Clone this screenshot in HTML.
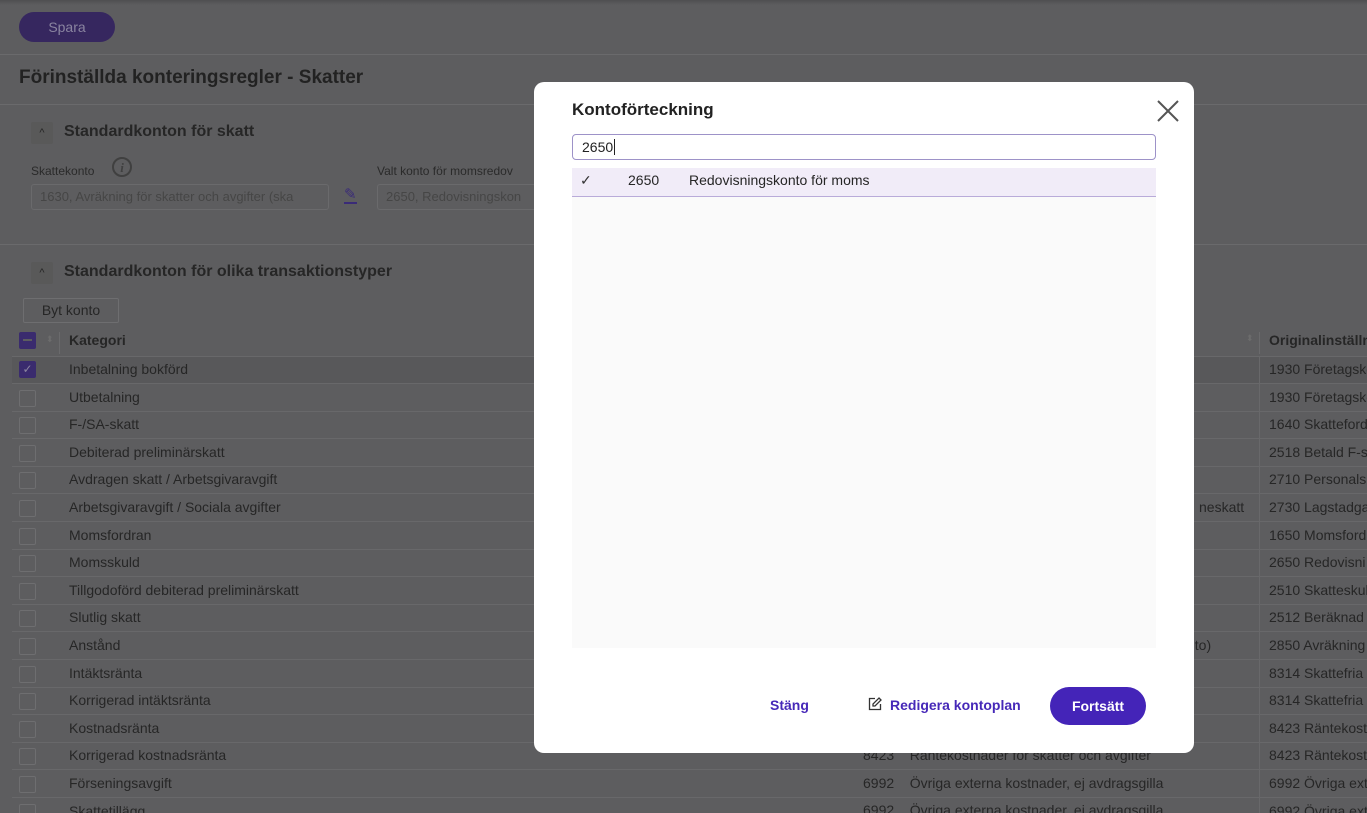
<!DOCTYPE html>
<html><head><meta charset="utf-8"><style>
*{box-sizing:border-box;margin:0;padding:0}
html,body{width:1367px;height:813px;overflow:hidden}
body{background:#5d5d5f;font-family:"Liberation Sans",sans-serif;color:#262626;position:relative;font-size:14px}
.a{position:absolute;white-space:nowrap}
.hl{position:absolute;left:0;right:0;height:1px;background:#6a6a6c}
.cb{position:absolute;left:19px;width:17px;height:17px;border:1px solid #6e6e70;border-radius:2px}
.rl{position:absolute;left:12px;right:0;height:1px;background:#68686a}
.modal{position:absolute;left:534px;top:82px;width:660px;height:671px;background:#fff;border-radius:10px}
</style></head><body>
<div class="a" style="left:0;top:0;width:1367px;height:5px;background:linear-gradient(#4f4f51,#5d5d5f)"></div>
<div class="a" style="left:19px;top:12px;width:96px;height:30px;border-radius:15px;background:#36275f;color:#8a84a0;text-align:center;line-height:30px;font-size:14px">Spara</div>
<div class="hl" style="top:54px"></div>
<div class="a" style="left:19px;top:67px;font-size:19px;font-weight:bold;color:#222">Förinställda konteringsregler - Skatter</div>
<div class="hl" style="top:104px"></div>
<div class="a" style="left:31px;top:122px;width:22px;height:22px;background:#595959;border-radius:2px;text-align:center;line-height:22px;font-size:11px">^</div>
<div class="a" style="left:64px;top:123px;font-size:16px;font-weight:bold;color:#262626">Standardkonton för skatt</div>
<div class="a" style="left:31px;top:164px;font-size:12px;color:#2a2a2a">Skattekonto</div>
<div class="a" style="left:112px;top:157px;width:20px;height:20px;border:2px solid #404040;border-radius:50%;text-align:center;font:italic bold 13px 'Liberation Serif',serif;line-height:17px;color:#404040">i</div>
<div class="a" style="left:31px;top:184px;width:298px;height:26px;border:1px solid #6a6a6c;border-radius:3px;padding-left:8px;line-height:24px;font-size:13px;color:#464646;overflow:hidden">1630, Avräkning för skatter och avgifter (ska</div>
<div class="a" style="left:344px;top:187px;font-size:15px;color:#3a2b78;border-bottom:2px solid #3a2b78;line-height:15px">✎</div>
<div class="a" style="left:377px;top:164px;font-size:12px;color:#2a2a2a">Valt konto för momsredov</div>
<div class="a" style="left:377px;top:184px;width:160px;height:26px;border:1px solid #6a6a6c;border-right:none;border-radius:3px 0 0 3px;padding-left:8px;line-height:24px;font-size:13px;color:#464646;overflow:hidden">2650, Redovisningskon</div>
<div class="hl" style="top:244px"></div>
<div class="a" style="left:31px;top:262px;width:22px;height:22px;background:#595959;border-radius:2px;text-align:center;line-height:22px;font-size:11px">^</div>
<div class="a" style="left:64px;top:263px;font-size:16px;font-weight:bold;color:#262626">Standardkonton för olika transaktionstyper</div>
<div class="a" style="left:23px;top:298px;width:96px;height:25px;border:1px solid #6e6e70;border-radius:2px;text-align:center;line-height:23px;font-size:14px;color:#262626">Byt konto</div>
<div class="a" style="left:19px;top:332px;width:17px;height:17px;background:#3a2b6e;border-radius:2px"><div style="margin:7px 4px;height:2px;background:#5d5d5f"></div></div>
<div class="a" style="left:46px;top:334px;font-size:9px;color:#6c6c6c">⬍</div>
<div class="a" style="left:59px;top:332px;width:1px;height:22px;background:#6a6a6c"></div>
<div class="a" style="left:69px;top:332px;font-size:14px;font-weight:bold">Kategori</div>
<div class="a" style="left:1246px;top:333px;font-size:9px;color:#6c6c6c">⬍</div>
<div class="a" style="left:1259px;top:332px;width:1px;height:22px;background:#6a6a6c"></div>
<div class="a" style="left:1269px;top:332px;font-size:14px;font-weight:bold">Originalinställn</div>
<div class="a" style="left:12px;top:356px;width:1355px;height:28px;background:#58585a"></div>
<div class="rl" style="top:356px"></div>
<div id="rows"></div>
<div class="a" style="left:19px;top:361px;width:17px;height:17px;background:#3a2b6e;border-radius:2px;color:#8c85a0;font-size:12px;text-align:center;line-height:17px">✓</div>
<div class="a" style="left:863px;top:747px">8423&nbsp;&nbsp;&nbsp;&nbsp;Räntekostnader för skatter och avgifter</div>
<div class="a" style="left:863px;top:775px">6992&nbsp;&nbsp;&nbsp;&nbsp;Övriga externa kostnader, ej avdragsgilla</div>
<div class="a" style="left:863px;top:802px">6992&nbsp;&nbsp;&nbsp;&nbsp;Övriga externa kostnader, ej avdragsgilla</div>
<div class="a" style="left:1199px;top:499px">neskatt</div>
<div class="a" style="left:1187px;top:637px">nto)</div>
<div class="modal">
<div class="a" style="left:38px;top:18px;font-size:17px;font-weight:bold;color:#222">Kontoförteckning</div>
<svg class="a" style="left:622px;top:17px" width="24" height="24" viewBox="0 0 24 24"><path d="M2 2L22 22M22 2L2 22" stroke="#555" stroke-width="2"/></svg>
<div class="a" style="left:38px;top:52px;width:584px;height:26px;border:1px solid #9d92c8;border-radius:4px;padding-left:9px;line-height:24px;font-size:14px;color:#222">2650<span style="border-left:1px solid #222;margin-left:1px"></span></div>
<div class="a" style="left:38px;top:86px;width:584px;height:29px;background:#f1ecf8;border-bottom:1px solid #b9abd9"></div>
<div class="a" style="left:46px;top:90px;font-size:14px;color:#333">✓</div>
<div class="a" style="left:94px;top:90px;font-size:14px">2650</div>
<div class="a" style="left:155px;top:90px;font-size:14px">Redovisningskonto för moms</div>
<div class="a" style="left:38px;top:115px;width:584px;height:451px;background:#fafafa"></div>
<div class="a" style="left:236px;top:615px;font-size:14px;font-weight:bold;color:#4628b8">Stäng</div>
<svg class="a" style="left:334px;top:615px" width="14" height="14" viewBox="0 0 14 14"><path d="M7 1.5H1.5V12.5H12.5V7" fill="none" stroke="#333" stroke-width="1.3"/><path d="M11 1L13 3L7 9H5V7Z" fill="none" stroke="#333" stroke-width="1.3"/></svg>
<div class="a" style="left:356px;top:615px;font-size:14px;font-weight:bold;color:#4628b8">Redigera kontoplan</div>
<div class="a" style="left:516px;top:605px;width:96px;height:38px;border-radius:19px;background:#4424b8;color:#fff;font-weight:bold;text-align:center;line-height:38px;font-size:14px">Fortsätt</div>
</div>
<script>
var cats=["Inbetalning bokförd","Utbetalning","F-/SA-skatt","Debiterad preliminärskatt","Avdragen skatt / Arbetsgivaravgift","Arbetsgivaravgift / Sociala avgifter","Momsfordran","Momsskuld","Tillgodoförd debiterad preliminärskatt","Slutlig skatt","Anstånd","Intäktsränta","Korrigerad intäktsränta","Kostnadsränta","Korrigerad kostnadsränta","Förseningsavgift","Skattetillägg"];
var orig=["1930 Företagsko","1930 Företagsko","1640 Skatteford","2518 Betald F-s","2710 Personalsk","2730 Lagstadga","1650 Momsford","2650 Redovisni","2510 Skatteskul","2512 Beräknad i","2850 Avräkning","8314 Skattefria","8314 Skattefria","8423 Räntekost","8423 Räntekost","6992 Övriga ext","6992 Övriga ext"];
var h="";
for(var i=0;i<cats.length;i++){var y=361+i*27.6;
h+='<div class="a" style="left:69px;top:'+y+'px">'+cats[i]+'</div><div class="a" style="left:1269px;top:'+y+'px">'+orig[i]+'</div>';
if(i>0)h+='<div class="cb" style="top:'+(y+1)+'px"></div>';
h+='<div class="rl" style="top:'+(y+22)+'px"></div>';}
h+='<div class="a" style="left:1259px;top:356px;width:1px;height:457px;background:#68686a"></div>';
document.getElementById("rows").innerHTML=h;
</script>
</body></html>
